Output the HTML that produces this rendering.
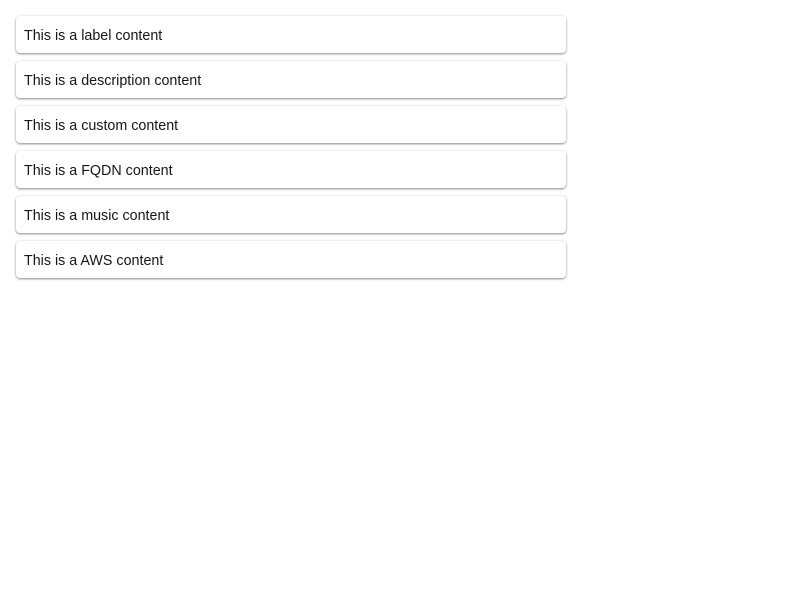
<!DOCTYPE html>
<html><head><style>
body{margin:0;background:#fff;font-family:"Liberation Sans",sans-serif;}
.c{position:absolute;left:16px;width:550px;height:37px;background:#fff;border-radius:4px;box-shadow:0 1px 2px rgba(0,0,0,0.45),0 0 3px rgba(0,0,0,0.06);font-size:14.3px;color:#161616;line-height:40px;padding-left:8px;box-sizing:border-box;overflow:hidden;}
</style></head><body>
<div class="c" style="top:16px">This is a label content</div>
<div class="c" style="top:61px">This is a description content</div>
<div class="c" style="top:106px">This is a custom content</div>
<div class="c" style="top:151px">This is a FQDN content</div>
<div class="c" style="top:196px">This is a music content</div>
<div class="c" style="top:241px">This is a AWS content</div>
</body></html>
